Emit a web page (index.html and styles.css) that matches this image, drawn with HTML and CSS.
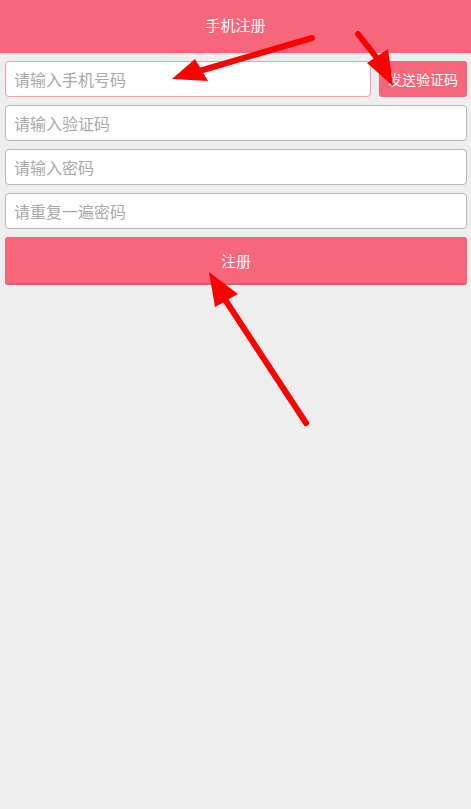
FILE: index.html
```html
<!DOCTYPE html>
<html lang="zh-CN">
<head>
    <meta charset="UTF-8">
    <meta name="viewport" content="width=device-width, initial-scale=1.0">
    <title>手机注册</title>
    <link rel="stylesheet" href="styles.css">
</head>
<body>
    <div class="page">
        <header class="top-bar">手机注册</header>

        <form class="reg-form" onsubmit="return false;">
            <div class="phone-row">
                <input type="text" class="field field-active" placeholder="请输入手机号码">
                <button type="button" class="code-btn">发送验证码</button>
            </div>
            <input type="text" class="field" placeholder="请输入验证码">
            <input type="password" class="field" placeholder="请输入密码">
            <input type="password" class="field" placeholder="请重复一遍密码">
            <button type="submit" class="submit-btn">注册</button>
        </form>

        <!-- annotation arrows -->
        <svg class="arrows" width="471" height="809" viewBox="0 0 471 809">
            <g stroke="#ff0000" stroke-width="6" stroke-linecap="round" fill="none">
                <line x1="312" y1="38" x2="196" y2="72"></line>
                <line x1="358" y1="34" x2="380" y2="62"></line>
                <line x1="306" y1="423" x2="224" y2="298"></line>
            </g>
            <g fill="#ff0000">
                <polygon points="172,79 195,59 208,81"></polygon>
                <polygon points="393,86 367,63 388,49"></polygon>
                <polygon points="209,272 215,307 238,294"></polygon>
            </g>
        </svg>
    </div>
</body>
</html>
```

FILE: styles.css
```css
body {
    margin: 0;
    padding: 0;
    background-color: #eeeeee;
    font-family: "Noto Sans CJK SC", "Noto Sans", sans-serif;
}

.page {
    position: relative;
    min-height: 809px;
}

.top-bar {
    height: 53px;
    line-height: 50px;
    background-color: #f6677b;
    color: #ffffff;
    text-align: center;
    font-size: 15px;
}

.reg-form {
    display: flex;
    flex-direction: column;
    gap: 8px;
    padding: 8px 4px 0 5px;
}

.phone-row {
    display: flex;
    gap: 8px;
}

.field {
    box-sizing: border-box;
    width: 100%;
    height: 36px;
    padding: 0 8px;
    border: 1px solid #b8b8b8;
    border-radius: 4px;
    background-color: #ffffff;
    font-family: inherit;
    font-size: 16px;
    color: #333;
    outline: none;
}

.field::placeholder {
    color: #a9a9a9;
}

.field-active {
    flex: 1;
    border-color: #f0a0ab;
}

.code-btn {
    width: 88px;
    height: 36px;
    flex-shrink: 0;
    border: none;
    border-radius: 3px;
    background-color: #f6677b;
    color: #ffffff;
    font-family: inherit;
    font-size: 14px;
    padding: 0;
}

.submit-btn {
    height: 48px;
    border: none;
    border-bottom: 2px solid #e05d71;
    border-radius: 3px;
    background-color: #f6677b;
    color: #ffffff;
    font-family: inherit;
    font-size: 15px;
}

.arrows {
    position: absolute;
    left: 0;
    top: 0;
    pointer-events: none;
}
```
